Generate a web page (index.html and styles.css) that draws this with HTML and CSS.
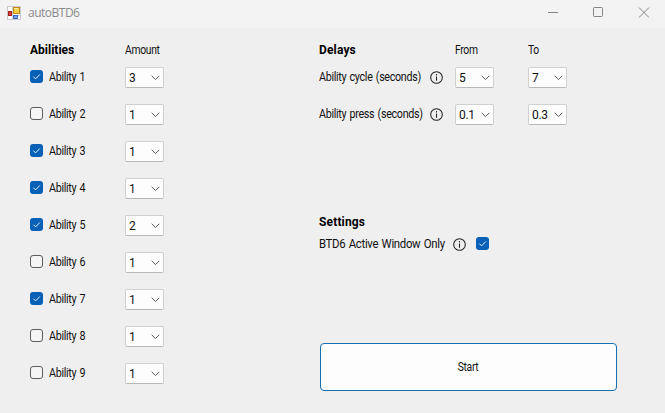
FILE: index.html
```html
<!DOCTYPE html>
<html lang="en">
<head>
<meta charset="utf-8">
<title>autoBTD6</title>
<link rel="stylesheet" href="styles.css">
</head>
<body>
<svg class="defs" width="0" height="0">
  <symbol id="tick" viewBox="0 0 13 13"><path d="M3.4 6.7 5.6 8.9 9.8 4.5"/></symbol>
  <symbol id="chevron" viewBox="0 0 9 6"><path d="M.7.8 4.5 4.6 8.3.8"/></symbol>
  <symbol id="info" viewBox="0 0 13 13"><circle cx="6.5" cy="6.5" r="5.8"/><path d="M6.5 5.5v4.2M6.5 3.1v1.3"/></symbol>
</svg>
<header class="titlebar">
  <svg class="logo" viewBox="0 0 14 14">
    <rect x=".5" y=".5" width="13" height="13" fill="#fafafa" stroke="#c9c9c9"/>
    <path d="M5.5 1v12M1 9.5h12" stroke="#d5d5d5"/>
    <rect x="6.5" y="1.5" width="6" height="6" fill="#f8cc43" stroke="#bd8b18"/>
    <path d="M7 2.5h4" stroke="#fff0a8"/>
    <rect x="1.5" y="5.5" width="3" height="4" fill="#d34538" stroke="#a51d18"/>
    <rect x="6.5" y="9.5" width="4" height="3" fill="#73a5ed" stroke="#386bbd"/>
  </svg>
  <span class="app-name">autoBTD6</span>
  <div class="controls">
    <svg viewBox="0 0 12 12"><path d="M2 5.5h10"/></svg>
    <svg viewBox="0 0 12 12"><rect x="1.5" y=".5" width="9" height="9" rx=".8"/></svg>
    <svg viewBox="0 0 12 12"><path d="m1 .5 10 10M11 .5 1 10.5"/></svg>
  </div>
</header>
<main class="form">
  <section class="abilities">
    <div class="row head"><h2>Abilities</h2><span class="column-name">Amount</span></div>
    <div class="row"><label><i class="check on"><svg><use href="#tick"/></svg></i><span class="name">Ability 1</span></label><div class="select"><span>3</span><svg><use href="#chevron"/></svg></div></div>
    <div class="row"><label><i class="check"></i><span class="name">Ability 2</span></label><div class="select"><span>1</span><svg><use href="#chevron"/></svg></div></div>
    <div class="row"><label><i class="check on"><svg><use href="#tick"/></svg></i><span class="name">Ability 3</span></label><div class="select"><span>1</span><svg><use href="#chevron"/></svg></div></div>
    <div class="row"><label><i class="check on"><svg><use href="#tick"/></svg></i><span class="name">Ability 4</span></label><div class="select"><span>1</span><svg><use href="#chevron"/></svg></div></div>
    <div class="row"><label><i class="check on"><svg><use href="#tick"/></svg></i><span class="name">Ability 5</span></label><div class="select"><span>2</span><svg><use href="#chevron"/></svg></div></div>
    <div class="row"><label><i class="check"></i><span class="name">Ability 6</span></label><div class="select"><span>1</span><svg><use href="#chevron"/></svg></div></div>
    <div class="row"><label><i class="check on"><svg><use href="#tick"/></svg></i><span class="name">Ability 7</span></label><div class="select"><span>1</span><svg><use href="#chevron"/></svg></div></div>
    <div class="row"><label><i class="check"></i><span class="name">Ability 8</span></label><div class="select"><span>1</span><svg><use href="#chevron"/></svg></div></div>
    <div class="row"><label><i class="check"></i><span class="name">Ability 9</span></label><div class="select"><span>1</span><svg><use href="#chevron"/></svg></div></div>
  </section>
  <section class="options">
    <div class="delays">
      <div class="row head"><h2 class="wide">Delays</h2><span></span><span class="column-name">From</span><span class="column-name">To</span></div>
      <div class="row"><span class="name">Ability cycle (seconds)</span><svg class="info"><use href="#info"/></svg><div class="select"><span>5</span><svg><use href="#chevron"/></svg></div><div class="select"><span>7</span><svg><use href="#chevron"/></svg></div></div>
      <div class="row"><span class="name">Ability press (seconds)</span><svg class="info"><use href="#info"/></svg><div class="select"><span>0.1</span><svg><use href="#chevron"/></svg></div><div class="select"><span>0.3</span><svg><use href="#chevron"/></svg></div></div>
    </div>
    <div class="settings">
      <h2 class="wide">Settings</h2>
      <div class="setting"><div class="setting-cell"><span class="setting-name">BTD6 Active Window Only</span></div><svg class="info"><use href="#info"/></svg><i class="check on"><svg><use href="#tick"/></svg></i></div>
    </div>
    <button class="start"><span>Start</span></button>
  </section>
</main>
</body>
</html>
```

FILE: styles.css
```css
* { box-sizing: border-box; }
body {
  margin: 0;
  width: 665px;
  height: 413px;
  overflow: hidden;
  background: #efefef;
  color: #111;
  font: 12px/16px Roboto, "Liberation Sans", sans-serif;
  letter-spacing: -0.35px;
}
svg { display: block; fill: none; }
.defs { position: absolute; }
span, h2 { white-space: nowrap; }
h2 { margin: 0; font-size: 12px; line-height: 16px; font-weight: 700; color: #000; letter-spacing: 0; }
h2.wide { letter-spacing: 0.15px; }
.titlebar { display: flex; align-items: center; height: 28px; padding: 0 15px 3px 7px; background: #f3f3f3; }
.logo { width: 14px; height: 14px; }
.app-name { margin-left: 7px; color: #8b8b8b; font: 12px/16px "Open Sans", sans-serif; letter-spacing: -0.5px; }
.controls { display: flex; gap: 34px; margin-left: auto; }
.controls svg { width: 12px; height: 12px; stroke: #858585; stroke-width: 1; }
.form { display: flex; height: 385px; padding-left: 30px; }
.abilities { width: 289px; }
.row { display: grid; align-items: center; height: 21px; margin-bottom: 16px; }
.row.head { height: 16px; margin: 14px 0 9px; }
.abilities .row { grid-template-columns: 95px 39px; }
label { display: flex; align-items: center; gap: 6px; }
.name, .column-name, .setting-name { display: inline-block; transform-origin: left center; }
.name { margin-top: -2px; word-spacing: 1px; transform: scaleX(.895); }
.column-name { transform: scaleX(.86); }
.check { width: 13px; height: 13px; margin-top: -2px; border: 1px solid #5c5c5c; border-radius: 3px; background: #f5f5f5; flex: none; }
.check.on { border: 0; background: #0860b7; }
.check svg { width: 13px; height: 13px; stroke: #e7f2ff; stroke-width: 1; }
.select { display: flex; align-items: center; justify-content: space-between; width: 39px; height: 21px; padding: 0 3px; border: 1px solid #d0d0d0; border-bottom-color: #b9b9b9; border-radius: 2px; background: #fdfdfd; }
.select svg { width: 9px; height: 6px; stroke: #575757; stroke-width: 1; }
.delays .row { grid-template-columns: 111px 25px 73px 39px; }
.delays .info { margin-top: -1px; }
.info { width: 13px; height: 13px; stroke: #222; stroke-width: 1.05; }
.settings { margin-top: 89px; }
.setting { display: flex; align-items: center; height: 16px; margin-top: 6px; }
.setting-cell { width: 134px; }
.setting-name { word-spacing: 1px; transform: scaleX(.95); }
.setting .check { margin-left: 10px; margin-top: -1px; }
.start { display: block; width: 297px; height: 48px; margin: 91px 0 0 1px; padding: 0; border: 1px solid #176eae; border-radius: 4px; background: #fdfdfd; color: #111; font: inherit; letter-spacing: inherit; }
.start span { display: inline-block; transform: scaleX(.86); }
```
